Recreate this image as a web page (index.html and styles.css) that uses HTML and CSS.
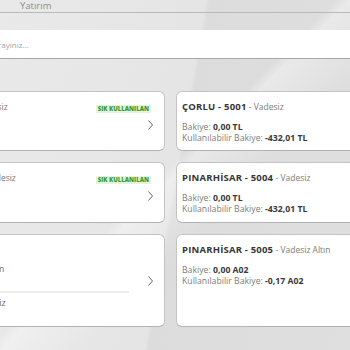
FILE: index.html
```html
<!DOCTYPE html>
<html lang="tr">
<head>
    <meta charset="UTF-8">
    <meta name="viewport" content="width=device-width, initial-scale=1.0">
    <title>Hesaplarım</title>
    <link rel="stylesheet" href="styles.css">
</head>
<body>
    <div class="page">
        <div class="tabs">
            <span class="tab">Yatırım</span>
        </div>

        <div class="search">
            <span class="placeholder">Hesap arayınız...</span>
        </div>

        <div class="accounts">
            <!-- row 1 -->
            <div class="card short">
                <div class="card-body">
                    <div class="title"><b>ÇORLU - 5002</b> - Vadesiz</div>
                </div>
                <div class="card-side">
                    <span class="badge">SIK KULLANILAN</span>
                    <svg class="chevron" width="5" height="10" viewBox="0 0 5 10"><polyline points="0.5,0.5 4.5,5 0.5,9.5" fill="none" stroke="#666" stroke-width="1"/></svg>
                </div>
            </div>

            <div class="card short">
                <div class="card-body">
                    <div class="title"><b>ÇORLU - 5001</b> - Vadesiz</div>
                    <div class="line">Bakiye: <b>0,00 TL</b></div>
                    <div class="line">Kullanılabilir Bakiye: <b>-432,01 TL</b></div>
                </div>
            </div>

            <!-- row 2 -->
            <div class="card mid">
                <div class="card-body">
                    <div class="title"><b>KAPAKLI - 5003</b> - Vadesiz</div>
                </div>
                <div class="card-side">
                    <span class="badge">SIK KULLANILAN</span>
                    <svg class="chevron" width="5" height="10" viewBox="0 0 5 10"><polyline points="0.5,0.5 4.5,5 0.5,9.5" fill="none" stroke="#666" stroke-width="1"/></svg>
                </div>
            </div>

            <div class="card mid">
                <div class="card-body">
                    <div class="title"><b>PINARHİSAR - 5004</b> - Vadesiz</div>
                    <div class="line">Bakiye: <b>0,00 TL</b></div>
                    <div class="line">Kullanılabilir Bakiye: <b>-432,01 TL</b></div>
                </div>
            </div>

            <!-- row 3 -->
            <div class="card tall">
                <div class="card-body group">
                    <div class="sub first">Yatırım Hesabı - Yatırım</div>
                    <div class="sub">Birikim Hesabı - Vadesiz</div>
                </div>
                <div class="card-side narrow">
                    <svg class="chevron" width="5" height="10" viewBox="0 0 5 10"><polyline points="0.5,0.5 4.5,5 0.5,9.5" fill="none" stroke="#666" stroke-width="1"/></svg>
                </div>
            </div>

            <div class="card tall">
                <div class="card-body">
                    <div class="title"><b>PINARHİSAR - 5005</b> - Vadesiz Altın</div>
                    <div class="line">Bakiye: <b>0,00 A02</b></div>
                    <div class="line">Kullanılabilir Bakiye: <b>-0,17 A02</b></div>
                </div>
            </div>
        </div>
    </div>
</body>
</html>
```

FILE: styles.css
```css
body {
    margin: 0;
    padding: 0;
    overflow: hidden;
    height: 350px;
    font-family: "Open Sans", Lato, sans-serif;
    color: #7a7a7a;
    background-color: #e3e3e3;
    background-image:
        linear-gradient(135deg, rgba(255,255,255,0) 48%, rgba(255,255,255,0.35) 50%, rgba(255,255,255,0) 62%),
        linear-gradient(100deg, #e9e9e9 0%, #e5e5e5 50%, #dcdcdc 51%, #dfdfdf 100%);
}

.page {
    width: 350px;
}

.tabs {
    height: 12px;
    border-bottom: 1px solid #b9b9b9;
    padding-left: 20px;
}

.tab {
    display: block;
    font-size: 9.5px;
    line-height: 11px;
    color: #8c8c8c;
}

.search {
    margin: 17px 0 0 -42px;
    width: 420px;
    height: 28px;
    background: #fff;
    border-bottom: 1px solid #a8a8a8;
    display: flex;
    align-items: center;
    padding-left: 10px;
}

.placeholder {
    font-size: 8px;
    color: #a2a2a2;
}

.accounts {
    margin: 32px 0 0 -100px;
    display: grid;
    grid-template-columns: 265px 265px;
    column-gap: 11px;
    row-gap: 11px;
}

.card {
    background: #fff;
    border: 1px solid #c4c4c4;
    border-bottom-color: #b2b2b2;
    border-radius: 6px;
    display: flex;
    box-sizing: border-box;
}

.card.short { height: 60px; }
.card.mid { height: 61px; }
.card.tall { height: 93px; }

.card-body {
    flex: 1;
    padding: 8px 5px 0;
    white-space: nowrap;
}

.title {
    font-size: 8.5px;
    line-height: 13px;
    color: #7c7c7c;
    margin-bottom: 9px;
}

.title b {
    font-size: 9.5px;
    font-weight: 700;
    letter-spacing: 0.2px;
    color: #363636;
}

.line {
    font-size: 8.7px;
    line-height: 11px;
    color: #7c7c7c;
}

.line b {
    font-weight: 700;
    color: #3a3a3a;
}

.card-side {
    width: 70px;
    padding: 13px 11px 0 0;
    display: flex;
    flex-direction: column;
    align-items: flex-end;
    gap: 7px;
}

.card-side.narrow {
    width: 24px;
    padding-top: 0;
    justify-content: center;
}

.badge {
    font-size: 6px;
    font-weight: 800;
    line-height: 6px;
    color: #3c9b2c;
    background: #e4f3de;
    padding: 1px 2px;
    margin-right: 2px;
    white-space: nowrap;
}

.chevron {
    display: block;
}

.group {
    padding: 28px 0 0 5px;
}

.sub {
    font-size: 9px;
    line-height: 12px;
    color: #6c6c6c;
}

.sub.first {
    padding-bottom: 16px;
    border-bottom: 2px solid #ededed;
    margin-bottom: 4px;
}
```
